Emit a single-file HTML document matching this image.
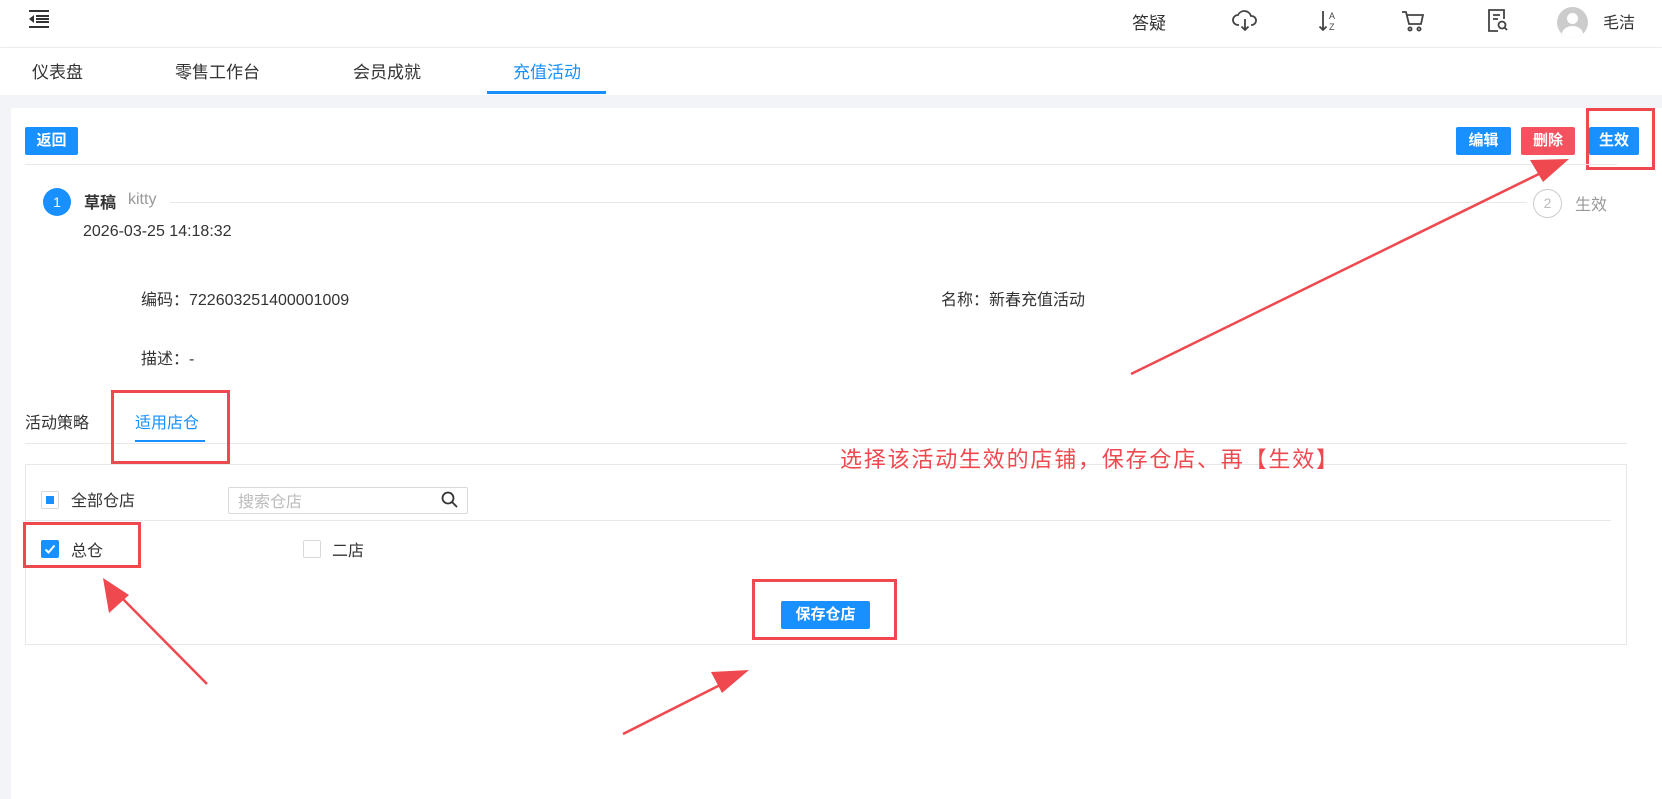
<!DOCTYPE html>
<html><head><meta charset="utf-8"><style>
*{margin:0;padding:0;box-sizing:border-box}
body{width:1662px;height:799px;overflow:hidden;background:#f3f4f7;font-family:"Liberation Sans","Noto Sans CJK SC",sans-serif;color:#333;position:relative;font-size:15px}
.a{position:absolute;white-space:nowrap}
.top{position:absolute;left:0;top:0;width:1662px;height:47px;background:#fff;box-shadow:0 1px 3px rgba(0,0,0,.06)}
.tabs{position:absolute;left:0;top:48px;width:1662px;height:47px;background:#fff}
.card{position:absolute;left:11px;top:108px;width:1651px;height:691px;background:#fff}
.btn{position:absolute;color:#fff;font-size:15px;text-align:center;font-weight:bold;border-radius:2px}
.blue{background:#1890ff}
.rbox{position:absolute;border:3px solid #f0484f}
.cb{position:absolute;width:18px;height:18px;border:1px solid #d9d9d9;border-radius:2px;background:#fff}
</style></head><body>
<div class="top"></div>
<svg class="a" style="left:28px;top:9px" width="22" height="20" viewBox="0 0 22 20"><g stroke="#333" stroke-width="2"><line x1="1" y1="2" x2="21" y2="2"/><line x1="8" y1="10" x2="21" y2="10"/><line x1="8" y1="7" x2="21" y2="7"/><line x1="8" y1="13" x2="21" y2="13"/><line x1="1" y1="18" x2="21" y2="18"/></g><path d="M6 6 L1 10 L6 14Z" fill="#333"/></svg>
<div class="a" style="left:1132px;top:9px;font-size:17px;color:#333">答疑</div>
<svg class="a" style="left:1232px;top:10px" width="26" height="22" viewBox="0 0 26 22" fill="none" stroke="#444" stroke-width="1.8"><path d="M7 15H6a5 5 0 0 1 0-10 7 7 0 0 1 13 1 4.5 4.5 0 0 1 1 9h-1"/><path d="M13 9v11M9.5 16.5 13 20l3.5-3.5"/></svg>
<svg class="a" style="left:1318px;top:9px" width="22" height="24" viewBox="0 0 22 24"><path d="M5 2v19M1.5 17.5 5 21l3.5-3.5" stroke="#444" stroke-width="1.8" fill="none"/><text x="11" y="10" font-size="9" fill="#444" font-family="Liberation Sans">A</text><text x="11" y="21" font-size="9" fill="#444" font-family="Liberation Sans">Z</text></svg>
<svg class="a" style="left:1401px;top:10px" width="24" height="22" viewBox="0 0 24 22" fill="none" stroke="#444" stroke-width="1.8"><path d="M1 2h4l3 12h12l2-9H6"/><circle cx="9" cy="19" r="1.6"/><circle cx="18" cy="19" r="1.6"/></svg>
<svg class="a" style="left:1487px;top:8px" width="22" height="26" viewBox="0 0 22 26" fill="none" stroke="#444" stroke-width="1.8"><path d="M17 11V2H2v21h9"/><path d="M6 7h7M6 11h5"/><circle cx="15" cy="17" r="3.5"/><path d="M17.5 19.5 20 22"/></svg>
<div class="a" style="left:1557px;top:7px;width:31px;height:31px;border-radius:50%;background:#ccc;overflow:hidden"><div style="position:absolute;left:10px;top:6px;width:11px;height:11px;border-radius:50%;background:#fff"></div><div style="position:absolute;left:5px;top:19px;width:21px;height:16px;border-radius:50%;background:#fff"></div></div>
<div class="a" style="left:1603px;top:9px;font-size:16px">毛洁</div>

<div class="tabs"></div>
<div class="a" style="left:32px;top:58px;font-size:17px">仪表盘</div>
<div class="a" style="left:175px;top:58px;font-size:17px">零售工作台</div>
<div class="a" style="left:353px;top:58px;font-size:17px">会员成就</div>
<div class="a" style="left:513px;top:58px;font-size:17px;color:#1890ff">充值活动</div>
<div class="a" style="left:487px;top:91px;width:119px;height:3px;background:#1890ff"></div>

<div class="card"></div>
<div class="btn blue" style="left:25px;top:127px;width:53px;height:28px;line-height:28px">返回</div>
<div class="btn blue" style="left:1456px;top:127px;width:55px;height:28px;line-height:28px">编辑</div>
<div class="btn" style="left:1521px;top:127px;width:54px;height:28px;line-height:28px;background:#f5515f">删除</div>
<div class="btn blue" style="left:1589px;top:127px;width:50px;height:28px;line-height:28px">生效</div>
<div class="rbox" style="left:1586px;top:108px;width:69px;height:62px"></div>
<div class="a" style="left:25px;top:164px;width:1592px;height:1px;background:#e8e8e8"></div>

<div class="a" style="left:43px;top:188px;width:28px;height:28px;border-radius:50%;background:#1890ff;color:#fff;text-align:center;line-height:28px;font-size:14px">1</div>
<div class="a" style="left:84px;top:189px;font-size:16px;font-weight:bold">草稿</div>
<div class="a" style="left:128px;top:191px;font-size:16px;color:#999">kitty</div>
<div class="a" style="left:170px;top:202px;width:1357px;height:1px;background:#e8e8e8"></div>
<div class="a" style="left:1533px;top:189px;width:29px;height:29px;border-radius:50%;border:1px solid #ccc;color:#bbb;text-align:center;line-height:27px;font-size:14px">2</div>
<div class="a" style="left:1575px;top:191px;font-size:16px;color:#999">生效</div>
<div class="a" style="left:83px;top:223px;font-size:16px">2026-03-25 14:18:32</div>

<div class="a" style="left:141px;top:286px;font-size:16px">编码：722603251400001009</div>
<div class="a" style="left:941px;top:286px;font-size:16px">名称：新春充值活动</div>
<div class="a" style="left:141px;top:345px;font-size:16px">描述：-</div>

<div class="a" style="left:25px;top:409px;font-size:16px">活动策略</div>
<div class="a" style="left:135px;top:409px;font-size:16px;color:#1890ff">适用店仓</div>
<div class="a" style="left:25px;top:443px;width:1602px;height:1px;background:#e8e8e8"></div>
<div class="a" style="left:135px;top:440px;width:70px;height:2px;background:#1890ff"></div>
<div class="rbox" style="left:111px;top:390px;width:119px;height:74px"></div>

<div class="a" style="left:25px;top:464px;width:1602px;height:181px;border:1px solid #e8e8e8"></div>
<div class="cb" style="left:41px;top:491px"><div style="position:absolute;left:4px;top:4px;width:8px;height:8px;background:#1890ff"></div></div>
<div class="a" style="left:71px;top:487px;font-size:16px">全部仓店</div>
<div class="a" style="left:228px;top:487px;width:240px;height:27px;border:1px solid #d9d9d9;border-radius:2px"></div>
<div class="a" style="left:238px;top:488px;font-size:16px;color:#bbb">搜索仓店</div>
<svg class="a" style="left:441px;top:491px" width="18" height="18" viewBox="0 0 18 18" fill="none" stroke="#333" stroke-width="1.8"><circle cx="7" cy="7" r="5.5"/><path d="M11 11l5 5"/></svg>
<div class="a" style="left:25px;top:520px;width:1586px;height:1px;background:#e8e8e8"></div>
<div class="cb" style="left:41px;top:540px;background:#1890ff;border-color:#1890ff"><svg width="16" height="16" viewBox="0 0 16 16"><path d="M3.5 8.5l3 3 6-7" stroke="#fff" stroke-width="2" fill="none"/></svg></div>
<div class="a" style="left:71px;top:537px;font-size:16px">总仓</div>
<div class="cb" style="left:303px;top:540px"></div>
<div class="a" style="left:332px;top:537px;font-size:16px">二店</div>
<div class="rbox" style="left:23px;top:522px;width:118px;height:46px"></div>
<div class="btn blue" style="left:781px;top:601px;width:89px;height:28px;line-height:28px">保存仓店</div>
<div class="rbox" style="left:752px;top:579px;width:145px;height:61px"></div>

<div class="a" style="left:840px;top:442px;font-size:22px;color:#f0484f;letter-spacing:1.8px">选择该活动生效的店铺，保存仓店、再【生效】</div>

<svg class="a" style="left:0;top:0" width="1662" height="799">
<g fill="#f0484f" stroke="#f0484f">
<line x1="1131" y1="374" x2="1545" y2="171" stroke-width="2.5"/>
<path d="M1569 159 L1530 160 L1543 182Z" stroke="none"/>
<line x1="207" y1="684" x2="118" y2="594" stroke-width="2.5"/>
<path d="M103 578 L109 613 L129 595Z" stroke="none"/>
<line x1="623" y1="734" x2="728" y2="681" stroke-width="2.5"/>
<path d="M749 670 L711 672 L722 693Z" stroke="none"/>
</g></svg>
</body></html>
